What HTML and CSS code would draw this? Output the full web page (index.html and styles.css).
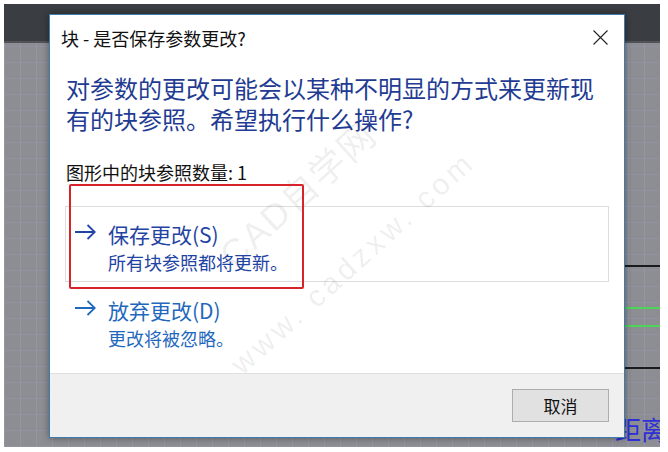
FILE: index.html
```html
<!DOCTYPE html>
<html lang="zh-CN">

<head>
  <meta charset="UTF-8">
  <title>块 - 是否保存参数更改?</title>
  <link rel="stylesheet" href="styles.css">
</head>

<body>

  <div class="screen">
    <!-- CAD ribbon strip + drawing canvas -->
    <div class="ribbon"></div>
    <div class="canvas">
      <span class="cad-line black line-a"></span>
      <span class="cad-line green line-b"></span>
      <span class="cad-line green line-c"></span>
      <span class="cad-line black line-d"></span>
      <span class="cad-text">距离</span>
    </div>

    <!-- Task dialog -->
    <div class="dialog">
      <div class="titlebar">
        <span class="title">块 - 是否保存参数更改?</span>
        <svg class="close" width="15" height="15" viewBox="0 0 15 15">
          <path d="M0.5 0.5 L14.5 14.5 M14.5 0.5 L0.5 14.5" stroke="#222" stroke-width="1.1" fill="none" />
        </svg>
      </div>

      <div class="content">
        <h1 class="instruction">对参数的更改可能会以某种不明显的方式来更新现<br>有的块参照。希望执行什么操作?</h1>
        <p class="count">图形中的块参照数量: 1</p>

        <div class="command hover">
          <svg class="arrow" width="21" height="16" viewBox="0 0 21 16">
            <path d="M0 8 H19.5 M12.5 1 L19.8 8 L12.5 15" fill="none" stroke="currentColor" stroke-width="1.8" />
          </svg>
          <div class="command-text">
            <div class="command-title">保存更改(S)</div>
            <div class="command-desc">所有块参照都将更新。</div>
          </div>
        </div>

        <div class="command">
          <svg class="arrow" width="21" height="16" viewBox="0 0 21 16">
            <path d="M0 8 H19.5 M12.5 1 L19.8 8 L12.5 15" fill="none" stroke="currentColor" stroke-width="1.8" />
          </svg>
          <div class="command-text">
            <div class="command-title">放弃更改(D)</div>
            <div class="command-desc">更改将被忽略。</div>
          </div>
        </div>
      </div>

      <div class="footer">
        <button class="btn">取消</button>
      </div>
    </div>

    <!-- site watermark -->
    <span class="watermark mark-cn">CAD自学网</span>
    <span class="watermark mark-url">www. cadzxw. com</span>

    <!-- red annotation box -->
    <div class="highlight"></div>
  </div>

</body>

</html>
```

FILE: styles.css
```css
/* Page */
body {
  margin: 0;
  background: #fff;
  font-family: "Noto Sans CJK SC", "Noto Sans", sans-serif;
}

/* Screenshot area */
.screen {
  position: relative;
  width: 656px;
  height: 443px;
  margin: 4px;
  overflow: hidden;
  display: flex;
  flex-direction: column;
}

.ribbon {
  height: 37px;
  background: #3a3d41;
  border-bottom: 2px solid #505358;
}

.canvas {
  flex: 1;
  position: relative;
  background-color: #8d8e93;
  background-image:
    repeating-linear-gradient(90deg, rgba(160, 162, 200, 0.35) 0 1px, transparent 1px 16px),
    repeating-linear-gradient(0deg, rgba(160, 162, 200, 0.2) 0 1px, transparent 1px 16px);
}

.cad-line {
  position: absolute;
  left: 560px;
  width: 96px;
  height: 2px;
}

.cad-line.black {
  background: #1a1a1a;
}

.cad-line.green {
  background: #4fd45a;
}

.line-a { top: 222px; }
.line-b { top: 264px; }
.line-c { top: 282px; }
.line-d { top: 324px; }

.cad-text {
  position: absolute;
  left: 611px;
  top: 373px;
  font-size: 26px;
  line-height: 26px;
  color: #2f2fd8;
  white-space: nowrap;
}

/* Dialog window */
.dialog {
  position: absolute;
  left: 45px;
  top: 10px;
  width: 574px;
  height: 422px;
  border: 1px solid #3f7cae;
  background: #fff;
  box-shadow: 0 0 7px rgba(0, 0, 0, 0.4);
  display: flex;
  flex-direction: column;
}

.titlebar {
  height: 45px;
  display: flex;
  align-items: center;
  justify-content: space-between;
  padding: 0 16px 0 11px;
}

.title {
  font-size: 18px;
  color: #111;
}

.content {
  flex: 1;
  padding: 12px 15px 0 15px;
}

.instruction {
  margin: 0 0 0 1px;
  font-size: 24px;
  font-weight: normal;
  line-height: 31px;
  color: #1f3c92;
}

.count {
  margin: 26px 0 22px 1px;
  font-size: 18px;
  line-height: 24px;
  color: #111;
}

/* Command links */
.command {
  height: 74px;
  border: 1px solid transparent;
  display: flex;
  align-items: flex-start;
  padding-left: 9px;
  color: #1f68bd;
}

.command.hover {
  border-color: #dcdcdc;
  color: #1f44a4;
}

.arrow {
  margin-top: 17px;
  flex-shrink: 0;
}

.command-text {
  margin-left: 12px;
  padding-top: 14px;
}

.command-title {
  font-size: 21px;
  line-height: 27px;
}

.command-desc {
  margin-top: 3px;
  font-size: 18px;
  line-height: 22px;
}

/* Footer */
.footer {
  height: 63px;
  border-top: 1px solid #dfdfdf;
  background: #f0f0f0;
  display: flex;
  align-items: center;
  justify-content: flex-end;
  padding-right: 15px;
}

.btn {
  width: 97px;
  height: 33px;
  background: #e1e1e1;
  border: 1px solid #adadad;
  font-family: "Noto Sans CJK SC", sans-serif;
  font-size: 17px;
  color: #111;
  padding: 0;
}

/* Watermark */
.watermark {
  position: absolute;
  transform: translate(-50%, -50%) rotate(-42deg);
  white-space: nowrap;
  color: rgba(0, 0, 0, 0.08);
  font-family: "Liberation Sans", "Noto Sans CJK SC", sans-serif;
  pointer-events: none;
}

.mark-cn {
  left: 292px;
  top: 188px;
  font-size: 36px;
  letter-spacing: 2px;
}

.mark-url {
  left: 349px;
  top: 259px;
  font-size: 30px;
  letter-spacing: 4px;
}

/* Annotation */
.highlight {
  position: absolute;
  left: 65px;
  top: 180px;
  width: 231px;
  height: 101px;
  border: 2px solid #d8232a;
  border-radius: 2px;
}
```
